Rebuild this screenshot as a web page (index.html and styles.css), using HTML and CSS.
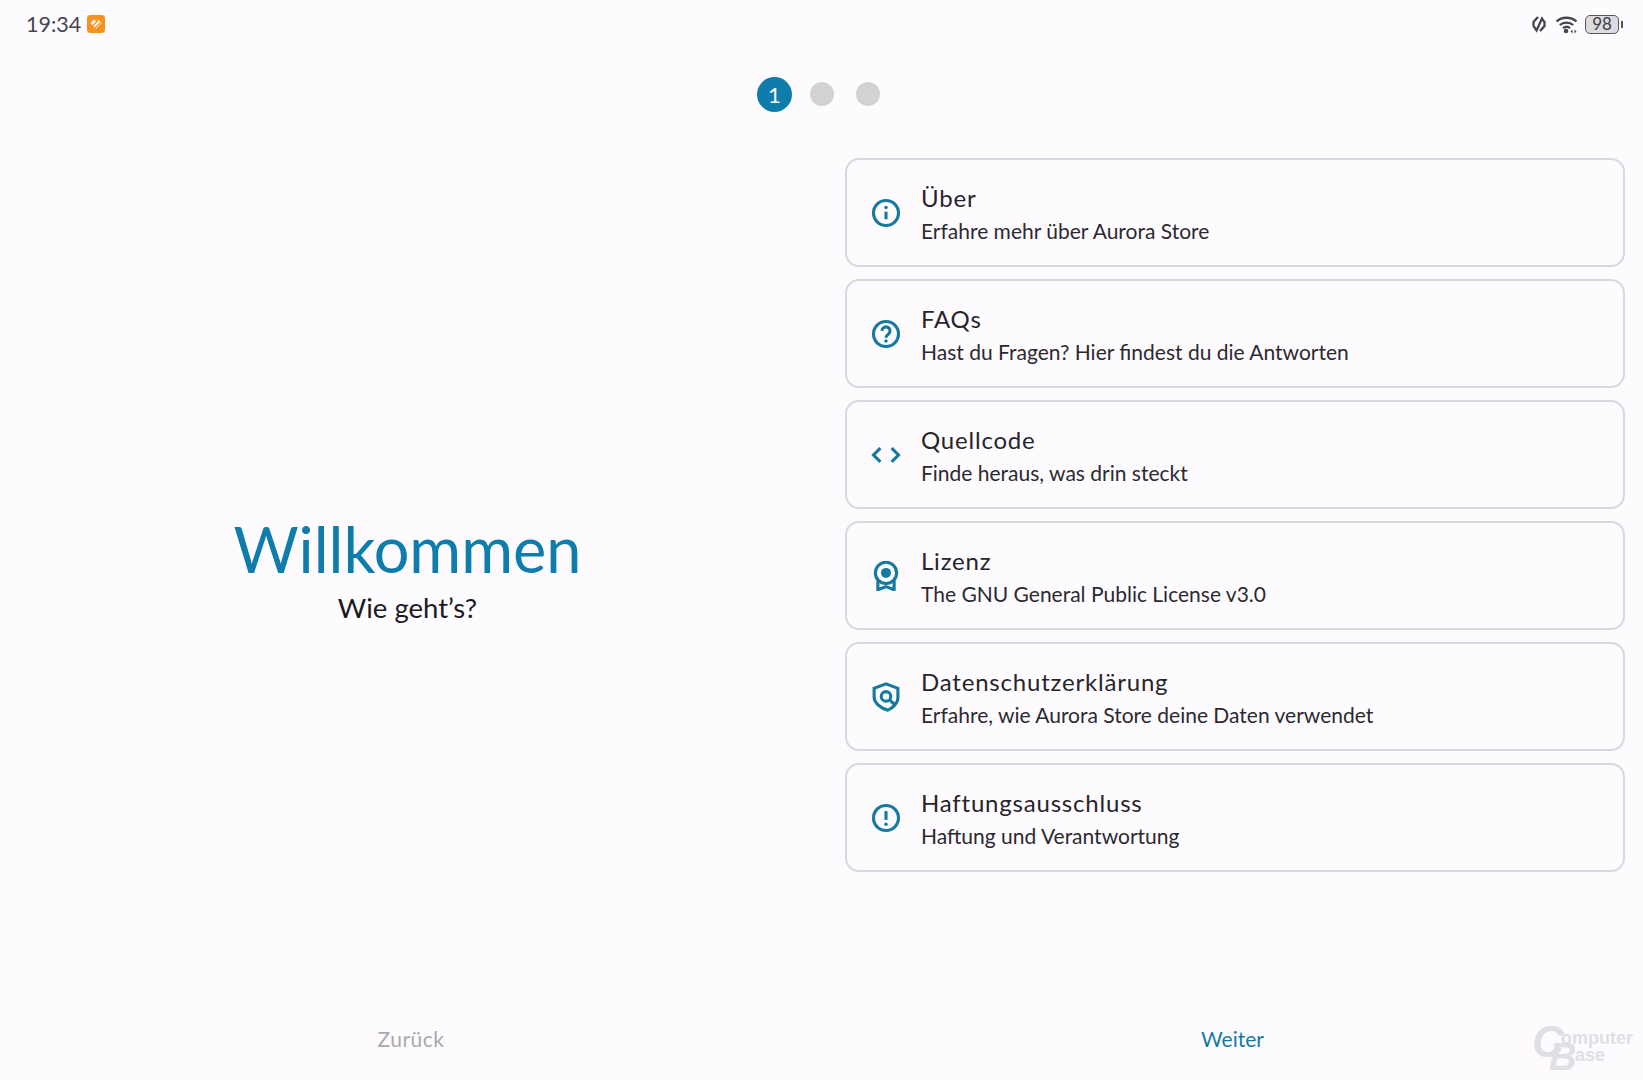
FILE: index.html
```html
<!DOCTYPE html>
<html lang="de">
<head>
    <meta charset="UTF-8">
    <meta name="viewport" content="width=device-width, initial-scale=1.0">
    <title>Aurora Store</title>
    <link rel="stylesheet" href="styles.css">
</head>
<body>
    <div class="status-bar">
        <div class="status-left">
            <span class="clock">19:34</span>
            <svg class="app-badge" viewBox="0 0 18 18">
                <rect width="18" height="18" rx="3.5" fill="#f7921e"/>
                <path d="M3.500 8L6.800 4.500 9 6.500 11.200 4.500 14.500 8 9 14z" fill="#fff"/>
                <path d="M5.500 11L11 5.500M8 13L13.500 7.500" stroke="#f7921e" stroke-width="1.300" fill="none"/>
            </svg>
        </div>
        <div class="status-right">
            <svg class="nfc-icon" viewBox="0 0 16 18">
                <path d="M7 2L2.500 7v4l3 4.500L11 3.500 13.500 7v4L9 16" fill="none" stroke="#444750" stroke-width="2.300"/>
            </svg>
            <svg class="wifi-icon" viewBox="0 0 24 19">
                <path d="M1.500 6.500C7 1.500 16 1.500 21.500 6.500M4.800 10C8.500 6.700 14.500 6.700 18.200 10M8 13.200c2.200-1.700 5-1.700 7 0" fill="none" stroke="#444750" stroke-width="2.300"/>
                <circle cx="11" cy="16" r="2.300" fill="#444750"/>
                <path d="M17.500 14.500v4l-2-2zM19.500 14.500v4l2-2z" fill="#444750"/>
            </svg>
            <div class="battery">
                <span class="battery-body">98</span>
                <span class="battery-tip"></span>
            </div>
        </div>
    </div>

    <div class="stepper">
        <span class="step step-active">1</span>
        <span class="step"></span>
        <span class="step"></span>
    </div>

    <main class="content">
        <section class="welcome">
            <h1>Willkommen</h1>
            <p>Wie geht’s?</p>
        </section>

        <section class="link-list">
            <a class="link-card">
                <svg class="card-icon" viewBox="0 0 24 24"><circle cx="12" cy="12" r="10" class="line"/><path d="M12 11v6" class="line"/><circle cx="12" cy="7.500" r="1.400" class="dot"/></svg>
                <div class="card-text">
                    <h2>Über</h2>
                    <p>Erfahre mehr über Aurora Store</p>
                </div>
            </a>
            <a class="link-card">
                <svg class="card-icon" viewBox="0 0 24 24"><circle cx="12" cy="12" r="10" class="line"/><path d="M8.800 9.500a3.200 3.200 0 1 1 5.200 2.500c-1.200.9-2 1.500-2 3" class="line"/><circle cx="12" cy="17.600" r="1.400" class="dot"/></svg>
                <div class="card-text">
                    <h2>FAQs</h2>
                    <p>Hast du Fragen? Hier findest du die Antworten</p>
                </div>
            </a>
            <a class="link-card">
                <svg class="card-icon" viewBox="0 0 24 24"><path d="M7.500 6.500L2 12l5.500 5.500M16.500 6.500L22 12l-5.500 5.500" class="line"/></svg>
                <div class="card-text">
                    <h2>Quellcode</h2>
                    <p>Finde heraus, was drin steckt</p>
                </div>
            </a>
            <a class="link-card">
                <svg class="card-icon" viewBox="0 0 24 24"><circle cx="12" cy="9.500" r="8.500" class="line"/><circle cx="12" cy="9.500" r="4" class="dot"/><path d="M5.500 15.500V23l6.500-2.500 6.500 2.500v-7.500" class="line"/></svg>
                <div class="card-text">
                    <h2>Lizenz</h2>
                    <p>The GNU General Public License v3.0</p>
                </div>
            </a>
            <a class="link-card">
                <svg class="card-icon" viewBox="0 0 24 24"><path d="M12 1.500l9.500 3.500v8c0 4-4.500 8-8 9.500C8 21 2.500 17 2.500 12V5z" class="line"/><circle cx="12" cy="11.500" r="3.800" class="line"/><path d="M15 14.500l4 3.500" class="line"/></svg>
                <div class="card-text">
                    <h2>Datenschutzerklärung</h2>
                    <p>Erfahre, wie Aurora Store deine Daten verwendet</p>
                </div>
            </a>
            <a class="link-card">
                <svg class="card-icon" viewBox="0 0 24 24"><circle cx="12" cy="12" r="10" class="line"/><path d="M12 6.500v7" class="line"/><circle cx="12" cy="17" r="1.400" class="dot"/></svg>
                <div class="card-text">
                    <h2>Haftungsausschluss</h2>
                    <p>Haftung und Verantwortung</p>
                </div>
            </a>
        </section>
    </main>

    <footer class="bottom-nav">
        <button class="nav-button nav-disabled">Zurück</button>
        <button class="nav-button">Weiter</button>
    </footer>

    <div class="watermark">
        <span class="mark-top">omputer</span>
        <span class="mark-bottom">ase</span>
        <span class="mark-c">C</span><span class="mark-b">B</span>
    </div>
</body>
</html>
```

FILE: styles.css
```css
* {
    margin: 0;
    padding: 0;
    box-sizing: border-box;
}

body {
    font-family: 'Lato', 'Noto Sans', sans-serif;
    background: #fefbff;
    color: #1c1b1f;
    width: 1643px;
    height: 1080px;
    overflow: hidden;
    position: relative;
    display: flex;
    flex-direction: column;
}

.status-bar {
    height: 48px;
    padding: 0 20px 0 26px;
    display: flex;
    justify-content: space-between;
    align-items: center;
}

.status-left {
    display: flex;
    align-items: center;
    gap: 6px;
}

.clock {
    font-size: 21.5px;
    color: #44464e;
}

.app-badge {
    width: 18px;
    height: 18px;
}

.status-right {
    display: flex;
    align-items: center;
    gap: 6px;
}

.nfc-icon {
    width: 16px;
    height: 18px;
    margin-right: 2px;
}

.wifi-icon {
    width: 24px;
    height: 19px;
}

.battery {
    display: flex;
    align-items: center;
    gap: 2px;
}

.battery-body {
    width: 34px;
    height: 19px;
    border: 1.500px solid #55575f;
    border-radius: 5px;
    background: #dcdbe0;
    color: #3c3e46;
    font-size: 17px;
    line-height: 16px;
    text-align: center;
}

.battery-tip {
    width: 2px;
    height: 7px;
    background: #55575f;
}

.stepper {
    height: 36px;
    margin-top: 28px;
    display: grid;
    grid-template-columns: repeat(3, 46.5px);
    justify-content: center;
    justify-items: center;
    align-items: center;
}

.step {
    width: 24px;
    height: 24px;
    border-radius: 50%;
    background: #d2d2d4;
}

.step-active {
    width: 35px;
    height: 35px;
    margin-right: 1px;
    background: #0e7dab;
    color: #fefbff;
    font-size: 22px;
    line-height: 35px;
    text-align: center;
}

.content {
    display: flex;
    margin-top: 46px;
    padding-right: 18px;
}

.welcome {
    width: 815px;
    flex-shrink: 0;
    display: flex;
    flex-direction: column;
    align-items: center;
    justify-content: center;
    padding-top: 105px;
}

.welcome h1 {
    font-size: 63px;
    font-weight: 400;
    line-height: 80px;
    margin-bottom: 1px;
    color: #0e7dab;
}

.welcome p {
    font-size: 27.5px;
    line-height: 36px;
}

.link-list {
    margin-left: 30px;
    flex: 1;
    display: flex;
    flex-direction: column;
    gap: 12px;
}

.link-card {
    height: 109px;
    border: 2px solid #d9d8dc;
    border-radius: 14px;
    padding: 0 24px;
    display: flex;
    align-items: center;
    gap: 20px;
}

.card-icon {
    width: 30px;
    height: 30px;
    flex-shrink: 0;
}

.card-icon .line {
    fill: none;
    stroke: #167a9e;
    stroke-width: 2.500;
}

.card-icon .dot {
    fill: #167a9e;
}

.card-text {
    padding-top: 2px;
}

.card-text h2 {
    font-size: 24px;
    font-weight: 400;
    line-height: 32px;
    letter-spacing: 0.8px;
    color: #26252a;
}

.card-text p {
    font-size: 21px;
    line-height: 30px;
    margin-top: 2px;
    color: #2b2a30;
}

.bottom-nav {
    position: absolute;
    left: 0;
    right: 0;
    bottom: 27px;
    display: flex;
}

.nav-button {
    flex: 1;
    border: none;
    background: none;
    font-family: inherit;
    font-size: 21px;
    line-height: 28px;
    color: #167a9e;
}

.nav-disabled {
    flex: none;
    width: 822px;
    letter-spacing: 0.5px;
    color: #a9a8ac;
}

.watermark {
    position: absolute;
    left: 1532px;
    top: 1020px;
    width: 108px;
    height: 54px;
    font-family: 'Liberation Sans', sans-serif;
    font-weight: 700;
    color: #e0dfe4;
}

.mark-c,
.mark-b {
    position: absolute;
    font-size: 44px;
    font-style: italic;
    line-height: 44px;
}

.mark-c {
    left: 0;
    top: 0;
}

.mark-b {
    left: 17px;
    top: 18px;
    font-size: 38px;
    line-height: 38px;
}

.mark-top,
.mark-bottom {
    position: absolute;
    font-size: 18px;
    line-height: 18px;
}

.mark-top {
    left: 29px;
    top: 9px;
}

.mark-bottom {
    left: 43px;
    top: 26px;
}
```
